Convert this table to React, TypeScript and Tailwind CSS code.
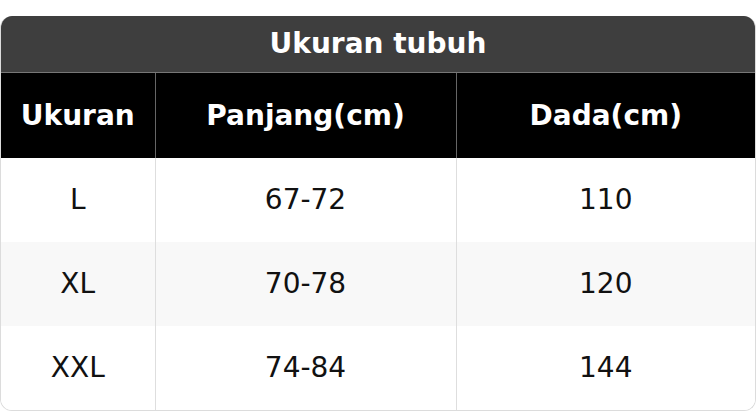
const rows = [
  { size: "L", panjang: "67-72", dada: "110" },
  { size: "XL", panjang: "70-78", dada: "120" },
  { size: "XXL", panjang: "74-84", dada: "144" },
];

export default function App() {
  return (
    <div className="w-[756px] h-[412px] bg-white pt-4 font-['DejaVu_Sans',sans-serif]">
      <div className="rounded-xl overflow-hidden border border-[#dcdcdc] border-t-0">
        <div className="h-[57px] bg-[#3e3e3e] flex items-center justify-center text-white text-[28px] font-bold border-b border-[#777]">
          Ukuran tubuh
        </div>
        <table className="w-full border-collapse text-[28px] table-fixed">
          <colgroup>
            <col className="w-[154px]" />
            <col className="w-[301px]" />
            <col />
          </colgroup>
          <thead>
            <tr className="bg-black text-white h-[85px]">
              <th className="font-bold border-r border-[#666]">Ukuran</th>
              <th className="font-bold border-r border-[#666]">Panjang(cm)</th>
              <th className="font-bold">Dada(cm)</th>
            </tr>
          </thead>
          <tbody>
            {rows.map((r, i) => (
              <tr key={r.size} className={`h-[84px] text-[#111] ${i === 1 ? "bg-[#f8f8f8]" : "bg-white"}`}>
                <td className="text-center border-r border-[#dedede]">{r.size}</td>
                <td className="text-center border-r border-[#dedede]">{r.panjang}</td>
                <td className="text-center">{r.dada}</td>
              </tr>
            ))}
          </tbody>
        </table>
      </div>
    </div>
  );
}
